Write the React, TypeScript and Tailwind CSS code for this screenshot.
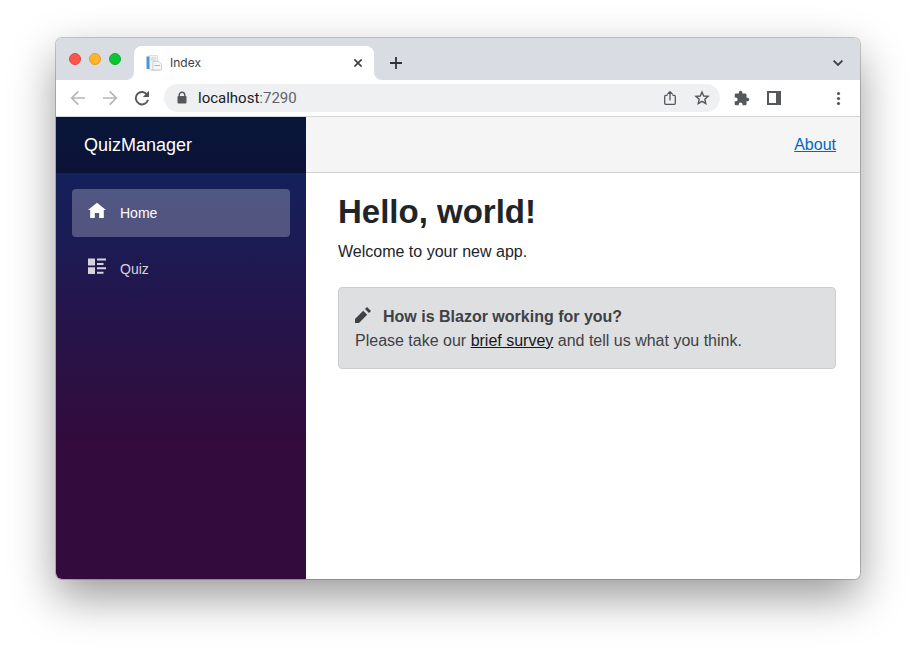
import React from "react";

function PageIcon() {
  return (
    <svg width="16" height="16" viewBox="0 0 16 16" aria-hidden="true">
      <path d="M3 .5h8.500v14H3z" fill="#f1f3f5" stroke="#c9ced3" strokeWidth=".6" />
      <path d="M.5 1.500h3v12.500h-3z" fill="#4e98cf" />
      <path d="M5 3h5M5 5h5" stroke="#b9c3cc" strokeWidth=".8" />
      <path d="M7 6.500h6l2.500 2.500v6H7z" fill="#f4f5f7" stroke="#b4bbc2" strokeWidth=".6" />
      <path d="M8.500 10.500h5.500" stroke="#aeb6be" strokeWidth="1.200" />
      <path d="M5 15.500h9" stroke="#c9ced3" strokeWidth=".8" />
    </svg>
  );
}

function TabStrip() {
  return (
    <div className="flex h-[42px] items-stretch bg-[#d9dce3] pt-2">
      <div className="flex w-[78px] gap-2 pt-[7px] pl-[13px]">
        <button aria-label="Close window" className="size-3 rounded-full border border-[#e2463f] bg-[#ff544d]" />
        <button aria-label="Minimize window" className="size-3 rounded-full border border-[#e0a023] bg-[#ffb429]" />
        <button aria-label="Zoom window" className="size-3 rounded-full border border-[#12ac28] bg-[#05c732]" />
      </div>
      <div className="relative flex w-60 items-center rounded-t-lg bg-white px-3">
        <svg className="absolute bottom-0 -left-2 size-2" viewBox="0 0 8 8" aria-hidden="true">
          <path d="M8 0v8H0a8 8 0 0 0 8-8z" fill="#fff" />
        </svg>
        <svg className="absolute -right-2 bottom-0 size-2" viewBox="0 0 8 8" aria-hidden="true">
          <path d="M0 0v8h8a8 8 0 0 1-8-8z" fill="#fff" />
        </svg>
        <PageIcon />
        <span className="ml-2 flex-1 font-[Inter,sans-serif] text-xs text-[#3c4043]">Index</span>
        <button aria-label="Close tab" className="flex size-2">
          <svg viewBox="0 0 8 8" className="size-2" fill="none" stroke="#3c4043" strokeWidth="1.600">
            <path d="m.4.4 7.200 7.200M7.600.4.4 7.600" />
          </svg>
        </button>
      </div>
      <button aria-label="New tab" className="ml-4 flex items-center">
        <svg width="12" height="12" viewBox="0 0 12 12" fill="none" stroke="#303337" strokeWidth="1.800">
          <path d="M6 0v12M0 6h12" />
        </svg>
      </button>
      <button aria-label="Search tabs" className="mr-[17px] ml-auto flex items-center">
        <svg width="10" height="6" viewBox="0 0 10 6" fill="none" stroke="#3c4043" strokeWidth="1.800">
          <path d="m.6.6 4.400 4.400L9.400.6" />
        </svg>
      </button>
    </div>
  );
}

function Toolbar() {
  return (
    <div className="flex h-[37px] items-center border-b border-[#d5d7da] bg-white px-[14px]">
      <button aria-label="Back">
        <svg width="16" height="16" viewBox="0 0 16 16" fill="none" stroke="#b4b6b9" strokeWidth="1.700">
          <path d="M15 8H2M8.300 1.400 1.700 8l6.600 6.600" />
        </svg>
      </button>
      <button aria-label="Forward" className="ml-4">
        <svg width="16" height="16" viewBox="0 0 16 16" fill="none" stroke="#b4b6b9" strokeWidth="1.700">
          <path d="M1 8h13M7.700 1.400 14.300 8l-6.600 6.600" />
        </svg>
      </button>
      <button aria-label="Reload" className="ml-4">
        <svg width="16" height="16" viewBox="0 0 16 16">
          <path d="M13.200 4.800A6.200 6.200 0 1 0 14 9.800" fill="none" stroke="#54575b" strokeWidth="1.900" />
          <path d="M15 .8v6.200H8.800z" fill="#54575b" />
        </svg>
      </button>
      <div className="ml-[14px] flex h-7 min-w-0 flex-1 items-center rounded-full bg-[#eff0f2] pr-[10px] pl-3">
        <svg width="12" height="14" viewBox="0 0 12 14" aria-hidden="true">
          <path d="M3.200 5.500V4a2.800 2.800 0 0 1 5.600 0v1.500" fill="none" stroke="#54575b" strokeWidth="1.400" />
          <rect x="1.500" y="5" width="9" height="7.500" rx="1" fill="#54575b" />
        </svg>
        <div className="ml-[10px] flex-1 font-[Roboto,sans-serif] text-[15px] leading-5 text-[#202124]">
          localhost<span className="text-[#606469]">:7290</span>
        </div>
        <button aria-label="Share">
          <svg width="16" height="16" viewBox="0 0 16 16" fill="none" stroke="#54575b" strokeWidth="1.300">
            <path d="M5.500 5.300H3.700a1 1 0 0 0-1 1v7a1 1 0 0 0 1 1h8.600a1 1 0 0 0 1-1v-7a1 1 0 0 0-1-1h-1.800M8 10.500V1.800M5.200 4.400 8 1.600l2.800 2.800" />
          </svg>
        </button>
        <button aria-label="Bookmark" className="ml-4">
          <svg width="16" height="16" viewBox="0 0 16 16" fill="none" stroke="#54575b" strokeWidth="1.400">
            <path d="m8 2 1.700 4 4.400.4-3.300 2.900 1 4.300L8 11.300l-3.800 2.300 1-4.300L1.900 6.400 6.300 6z" />
          </svg>
        </button>
      </div>
      <button aria-label="Extensions" className="ml-[14px]">
        <svg width="16" height="16" viewBox="1 0 23 23" fill="#54575b">
          <path d="M20.500 11H19V7a2 2 0 0 0-2-2h-4V3.500a2.500 2.500 0 0 0-5 0V5H4a2 2 0 0 0-2 2v3.800h1.500a2.700 2.700 0 0 1 0 5.400H2V20a2 2 0 0 0 2 2h3.800v-1.500a2.700 2.700 0 0 1 5.400 0V22H17a2 2 0 0 0 2-2v-4h1.500a2.500 2.500 0 0 0 0-5z" />
        </svg>
      </button>
      <button aria-label="Side panel" className="ml-4">
        <svg width="16" height="16" viewBox="0 0 16 16">
          <path d="M1 1h14v14H1zM3 3v10h7V3z" fill="#54575b" fillRule="evenodd" />
        </svg>
      </button>
      <button aria-label="Menu" className="ml-12">
        <svg width="16" height="16" viewBox="0 0 16 16" fill="#54575b">
          <circle cx="8.500" cy="3.500" r="1.600" />
          <circle cx="8.500" cy="8.500" r="1.600" />
          <circle cx="8.500" cy="13.500" r="1.600" />
        </svg>
      </button>
    </div>
  );
}

function Sidebar() {
  return (
    <aside className="w-[250px] shrink-0 bg-[linear-gradient(180deg,#0d2561_0%,#330b3d_70%)]">
      <div className="flex h-14 items-center bg-black/40 pl-7">
        <a href="#home" className="text-lg text-white">QuizManager</a>
      </div>
      <nav className="flex flex-col gap-2 p-4 text-sm">
        <a href="#home" className="flex h-12 items-center rounded bg-white/25 pl-4 text-white">
          <svg className="mb-1" width="18" height="18" viewBox="0 0 18 18" fill="currentColor" aria-hidden="true">
            <path d="M9 .7 0 8h2.200v8h4.600v-5h4.400v5h4.600V8H18z" />
          </svg>
          <span className="ml-[14px]">Home</span>
        </a>
        <a href="#quiz" className="flex h-12 items-center rounded pl-4 text-[#d5d3da]">
          <svg className="mb-1" width="18" height="18" viewBox="0 0 18 18" fill="currentColor" aria-hidden="true">
            <path d="M0 .5h7v7H0zM0 9.200h7v6.800H0zM9 .5h9v2H9zM9 5h6.500v2H9zM9 9.200h9v2H9zM9 13.800h6.500v2H9z" />
          </svg>
          <span className="ml-[14px]">Quiz</span>
        </a>
      </nav>
    </aside>
  );
}

export default function App() {
  return (
    <div className="flex min-h-screen bg-white px-14 pt-[38px] pb-[74px] font-['Liberation_Sans',Arial,sans-serif]">
      <div className="flex min-w-0 flex-1 flex-col overflow-hidden rounded-md shadow-[0_0_0_1px_rgba(0,0,0,0.2),0_18px_45px_rgba(0,0,0,0.4)]">
        <TabStrip />
        <Toolbar />
        <div className="flex flex-1 bg-white">
          <Sidebar />
          <main className="min-w-0 flex-1">
            <div className="flex h-14 items-center justify-end border-b border-[#d1d2d4] bg-[#f5f5f5] px-6 pt-px">
              <a href="#about" className="text-[#0068c0] underline">About</a>
            </div>
            <article className="pt-4 pr-6 pl-8 text-[#212529]">
              <h1 className="text-[33px] leading-[46px] font-bold">Hello, world!</h1>
              <p className="mt-[5px] leading-6">Welcome to your new app.</p>
              <div className="mt-[23px] rounded border border-[#cccfd2] bg-[#dedfe1] px-4 pt-[17px] pb-[15px] leading-6 text-[#3e4145]">
                <div className="flex items-center">
                  <svg className="mb-1" width="16" height="16" viewBox="0 0 16 16" fill="currentColor" aria-hidden="true">
                    <path d="M0 16v-4l8.200-8.200 4 4L4 16zM10 2 12 0l4 4-2 2z" />
                  </svg>
                  <strong className="ml-3">How is Blazor working for you?</strong>
                </div>
                <p>
                  Please take our <a href="#survey" className="text-[#15181b] underline">brief survey</a> and tell us what you think.
                </p>
              </div>
            </article>
          </main>
        </div>
      </div>
    </div>
  );
}
